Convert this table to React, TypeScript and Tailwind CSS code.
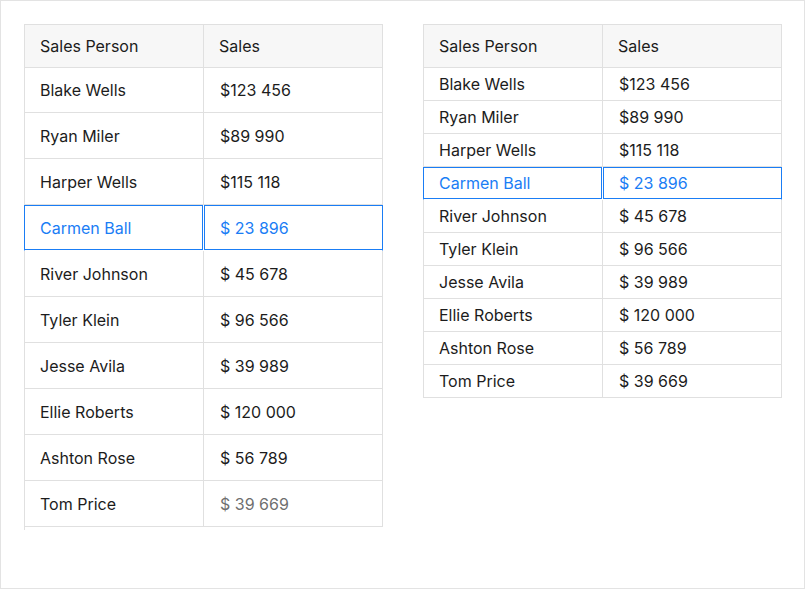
import React from "react";

const data: [string, string][] = [
  ["Blake Wells", "$123 456"],
  ["Ryan Miler", "$89 990"],
  ["Harper Wells", "$115 118"],
  ["Carmen Ball", "$ 23 896"],
  ["River Johnson", "$ 45 678"],
  ["Tyler Klein", "$ 96 566"],
  ["Jesse Avila", "$ 39 989"],
  ["Ellie Roberts", "$ 120 000"],
  ["Ashton Rose", "$ 56 789"],
  ["Tom Price", "$ 39 669"],
];

function Table({ tall }: { tall: boolean }) {
  return (
    <div className="w-[359px] flex flex-col">
      <div className="grid grid-cols-[179px_180px] h-[44px] bg-[#f7f7f7]">
        <div className="flex items-center pl-[15px] border-l border-t border-b border-[#e0e0e0]">Sales Person</div>
        <div className="flex items-center pl-[15px] border border-[#e0e0e0]">Sales</div>
      </div>
      {data.map(([name, sales], i) => {
        const sel = name === "Carmen Ball";
        const muted = tall && i === data.length - 1;
        const h = tall ? (i === 0 ? "h-[45px]" : "h-[46px]") : "h-[33px]";
        return (
          <div key={name} className={`grid grid-cols-[179px_180px] ${h} ${sel ? "text-[#1a7df5]" : ""}`}>
            <div
              className={`flex items-center pl-[15px] border-l border-b ${
                sel
                  ? "border-l-[#1a7df5] border-b-white shadow-[inset_0_1px_0_0_#1a7df5,inset_-1px_0_0_0_#1a7df5,inset_0_-1px_0_0_#1a7df5]"
                  : "border-[#e0e0e0]"
              }`}
            >
              {name}
            </div>
            <div
              className={`flex items-center pl-[16px] border-l border-r border-b ${
                sel
                  ? "border-l-white border-r-[#1a7df5] border-b-white shadow-[inset_0_1px_0_0_#1a7df5,inset_1px_0_0_0_#1a7df5,inset_0_-1px_0_0_#1a7df5]"
                  : "border-[#e0e0e0]"
              } ${muted ? "text-[#6f6f6f]" : ""}`}
            >
              {sales}
            </div>
          </div>
        );
      })}
    </div>
  );
}

export default function App() {
  return (
    <div
      className="w-[805px] h-[589px] border border-[#e3e3e3] bg-white text-[16px] text-[#1c1c1c]"
      style={{ fontFamily: "Inter, 'Noto Sans', sans-serif" }}
    >
      <div className="flex gap-[40px] pl-[23px] pt-[23px] items-start">
        <div className="flex flex-col">
          <Table tall />
          <div className="h-[3px] w-px bg-[#e0e0e0]" />
        </div>
        <Table tall={false} />
      </div>
    </div>
  );
}
